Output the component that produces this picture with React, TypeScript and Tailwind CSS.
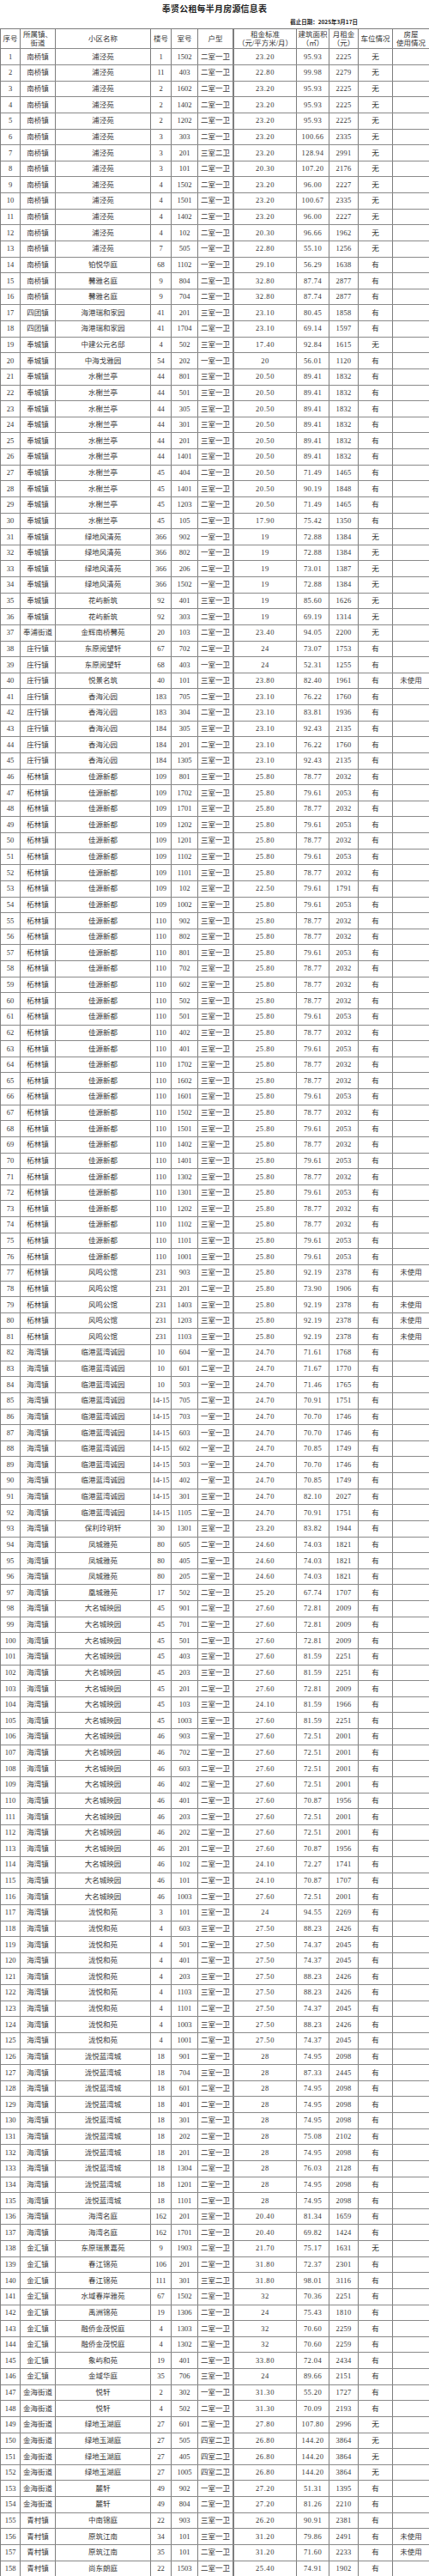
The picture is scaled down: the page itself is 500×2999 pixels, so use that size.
import React from "react";

const RAW = `南桥镇|浦泾苑|1|1502|二室一卫|23.20|95.93|2225|无
南桥镇|浦泾苑|11|403|二室一卫|22.80|99.98|2279|无
南桥镇|浦泾苑|2|1602|二室一卫|23.20|95.93|2225|无
南桥镇|浦泾苑|2|1402|二室一卫|23.20|95.93|2225|无
南桥镇|浦泾苑|2|1202|二室一卫|23.20|95.93|2225|无
南桥镇|浦泾苑|3|303|二室一卫|23.20|100.66|2335|无
南桥镇|浦泾苑|3|201|三室二卫|23.20|128.94|2991|无
南桥镇|浦泾苑|3|101|二室一卫|20.30|107.20|2176|无
南桥镇|浦泾苑|4|1502|二室一卫|23.20|96.00|2227|无
南桥镇|浦泾苑|4|1501|二室一卫|23.20|100.67|2335|无
南桥镇|浦泾苑|4|1402|二室一卫|23.20|96.00|2227|无
南桥镇|浦泾苑|4|102|二室一卫|20.30|96.66|1962|无
南桥镇|浦泾苑|7|505|一室一卫|22.80|55.10|1256|无
南桥镇|铂悦华庭|68|1102|一室一卫|29.10|56.29|1638|有
南桥镇|馨雅名庭|9|804|二室一卫|32.80|87.74|2877|有
南桥镇|馨雅名庭|9|704|二室一卫|32.80|87.74|2877|有
四团镇|海港瑞和家园|41|201|三室一卫|23.10|80.45|1858|有
四团镇|海港瑞和家园|41|1704|二室一卫|23.10|69.14|1597|有
奉城镇|中建公元名邸|4|502|三室一卫|17.40|92.84|1615|无
奉城镇|中海戈雅园|54|202|一室一卫|20|56.01|1120|有
奉城镇|水榭兰亭|44|801|三室一卫|20.50|89.41|1832|有
奉城镇|水榭兰亭|44|501|三室一卫|20.50|89.41|1832|有
奉城镇|水榭兰亭|44|305|三室一卫|20.50|89.41|1832|有
奉城镇|水榭兰亭|44|301|三室一卫|20.50|89.41|1832|有
奉城镇|水榭兰亭|44|201|三室一卫|20.50|89.41|1832|有
奉城镇|水榭兰亭|44|1401|三室一卫|20.50|89.41|1832|有
奉城镇|水榭兰亭|45|404|二室一卫|20.50|71.49|1465|有
奉城镇|水榭兰亭|45|1401|三室一卫|20.50|90.19|1848|有
奉城镇|水榭兰亭|45|1203|二室一卫|20.50|71.49|1465|有
奉城镇|水榭兰亭|45|105|二室一卫|17.90|75.42|1350|有
奉城镇|绿地风清苑|366|902|一室一卫|19|72.88|1384|无
奉城镇|绿地风清苑|366|802|一室一卫|19|72.88|1384|无
奉城镇|绿地风清苑|366|206|二室一卫|19|73.01|1387|无
奉城镇|绿地风清苑|366|1502|一室一卫|19|72.88|1384|无
奉城镇|花屿新筑|92|401|三室一卫|19|85.60|1626|无
奉城镇|花屿新筑|92|303|二室一卫|19|69.19|1314|无
奉浦街道|金辉南桥馨苑|20|103|二室一卫|23.40|94.05|2200|无
庄行镇|东原阅望轩|67|702|二室一卫|24|73.07|1753|有
庄行镇|东原阅望轩|68|403|一室一卫|24|52.31|1255|有
庄行镇|悦景名筑|40|101|三室一卫|23.80|82.40|1961|有|未使用
庄行镇|香海沁园|183|705|二室一卫|23.10|76.22|1760|有
庄行镇|香海沁园|183|304|二室一卫|23.10|83.81|1936|有
庄行镇|香海沁园|184|305|三室一卫|23.10|92.43|2135|有
庄行镇|香海沁园|184|201|二室一卫|23.10|76.22|1760|有
庄行镇|香海沁园|184|1305|三室一卫|23.10|92.43|2135|有
柘林镇|佳源新都|109|801|三室一卫|25.80|78.77|2032|有
柘林镇|佳源新都|109|1702|三室一卫|25.80|79.61|2053|有
柘林镇|佳源新都|109|1701|三室一卫|25.80|78.77|2032|有
柘林镇|佳源新都|109|1202|三室一卫|25.80|79.61|2053|有
柘林镇|佳源新都|109|1201|三室一卫|25.80|78.77|2032|有
柘林镇|佳源新都|109|1102|三室一卫|25.80|79.61|2053|有
柘林镇|佳源新都|109|1101|三室一卫|25.80|78.77|2032|有
柘林镇|佳源新都|109|102|三室一卫|22.50|79.61|1791|有
柘林镇|佳源新都|109|1002|三室一卫|25.80|79.61|2053|有
柘林镇|佳源新都|110|902|三室一卫|25.80|78.77|2032|有
柘林镇|佳源新都|110|802|三室一卫|25.80|78.77|2032|有
柘林镇|佳源新都|110|801|三室一卫|25.80|79.61|2053|有
柘林镇|佳源新都|110|702|三室一卫|25.80|78.77|2032|有
柘林镇|佳源新都|110|602|三室一卫|25.80|78.77|2032|有
柘林镇|佳源新都|110|502|三室一卫|25.80|78.77|2032|有
柘林镇|佳源新都|110|501|三室一卫|25.80|79.61|2053|有
柘林镇|佳源新都|110|402|三室一卫|25.80|78.77|2032|有
柘林镇|佳源新都|110|401|三室一卫|25.80|79.61|2053|有
柘林镇|佳源新都|110|1702|三室一卫|25.80|78.77|2032|有
柘林镇|佳源新都|110|1602|三室一卫|25.80|78.77|2032|有
柘林镇|佳源新都|110|1601|三室一卫|25.80|79.61|2053|有
柘林镇|佳源新都|110|1502|三室一卫|25.80|78.77|2032|有
柘林镇|佳源新都|110|1501|三室一卫|25.80|79.61|2053|有
柘林镇|佳源新都|110|1402|三室一卫|25.80|78.77|2032|有
柘林镇|佳源新都|110|1401|三室一卫|25.80|79.61|2053|有
柘林镇|佳源新都|110|1302|三室一卫|25.80|78.77|2032|有
柘林镇|佳源新都|110|1301|三室一卫|25.80|79.61|2053|有
柘林镇|佳源新都|110|1202|三室一卫|25.80|78.77|2032|有
柘林镇|佳源新都|110|1102|三室一卫|25.80|78.77|2032|有
柘林镇|佳源新都|110|1101|三室一卫|25.80|79.61|2053|有
柘林镇|佳源新都|110|1001|三室一卫|25.80|79.61|2053|有
柘林镇|风鸣公馆|231|903|三室一卫|25.80|92.19|2378|有|未使用
柘林镇|风鸣公馆|231|201|二室一卫|25.80|73.90|1906|有
柘林镇|风鸣公馆|231|1403|三室一卫|25.80|92.19|2378|有|未使用
柘林镇|风鸣公馆|231|1203|三室一卫|25.80|92.19|2378|有|未使用
柘林镇|风鸣公馆|231|1103|三室一卫|25.80|92.19|2378|有|未使用
海湾镇|临港蓝湾诚园|10|604|一室一卫|24.70|71.61|1768|有
海湾镇|临港蓝湾诚园|10|601|二室一卫|24.70|71.67|1770|有
海湾镇|临港蓝湾诚园|10|503|一室一卫|24.70|71.46|1765|有
海湾镇|临港蓝湾诚园|14-15|705|二室一卫|24.70|70.91|1751|有
海湾镇|临港蓝湾诚园|14-15|703|一室一卫|24.70|70.70|1746|有
海湾镇|临港蓝湾诚园|14-15|603|一室一卫|24.70|70.70|1746|有
海湾镇|临港蓝湾诚园|14-15|602|一室一卫|24.70|70.85|1749|有
海湾镇|临港蓝湾诚园|14-15|503|一室一卫|24.70|70.70|1746|有
海湾镇|临港蓝湾诚园|14-15|402|一室一卫|24.70|70.85|1749|有
海湾镇|临港蓝湾诚园|14-15|301|三室一卫|24.70|82.10|2027|有
海湾镇|临港蓝湾诚园|14-15|1105|二室一卫|24.70|70.91|1751|有
海湾镇|保利玲玥轩|30|1301|三室一卫|23.20|83.82|1944|有
海湾镇|凤城雅苑|80|605|二室一卫|24.60|74.03|1821|有
海湾镇|凤城雅苑|80|405|二室一卫|24.60|74.03|1821|有
海湾镇|凤城雅苑|80|205|二室一卫|24.60|74.03|1821|有
海湾镇|凰城雅苑|17|502|二室一卫|25.20|67.74|1707|有
海湾镇|大名城映园|45|901|二室一卫|27.60|72.81|2009|有
海湾镇|大名城映园|45|701|二室一卫|27.60|72.81|2009|有
海湾镇|大名城映园|45|501|二室一卫|27.60|72.81|2009|有
海湾镇|大名城映园|45|403|三室一卫|27.60|81.59|2251|有
海湾镇|大名城映园|45|203|三室一卫|27.60|81.59|2251|有
海湾镇|大名城映园|45|201|二室一卫|27.60|72.81|2009|有
海湾镇|大名城映园|45|103|三室一卫|24.10|81.59|1966|有
海湾镇|大名城映园|45|1003|三室一卫|27.60|81.59|2251|有
海湾镇|大名城映园|46|903|二室一卫|27.60|72.51|2001|有
海湾镇|大名城映园|46|702|二室一卫|27.60|72.51|2001|有
海湾镇|大名城映园|46|603|二室一卫|27.60|72.51|2001|有
海湾镇|大名城映园|46|402|二室一卫|27.60|72.51|2001|有
海湾镇|大名城映园|46|401|二室一卫|27.60|70.87|1956|有
海湾镇|大名城映园|46|203|二室一卫|27.60|72.51|2001|有
海湾镇|大名城映园|46|202|二室一卫|27.60|72.51|2001|有
海湾镇|大名城映园|46|201|二室一卫|27.60|70.87|1956|有
海湾镇|大名城映园|46|102|二室一卫|24.10|72.27|1741|有
海湾镇|大名城映园|46|101|二室一卫|24.10|70.87|1707|有
海湾镇|大名城映园|46|1003|二室一卫|27.60|72.51|2001|有
海湾镇|泷悦和苑|3|101|三室一卫|24|94.55|2269|有
海湾镇|泷悦和苑|4|603|三室一卫|27.50|88.23|2426|有
海湾镇|泷悦和苑|4|501|二室一卫|27.50|74.37|2045|有
海湾镇|泷悦和苑|4|401|二室一卫|27.50|74.37|2045|有
海湾镇|泷悦和苑|4|203|三室一卫|27.50|88.23|2426|有
海湾镇|泷悦和苑|4|1103|三室一卫|27.50|88.23|2426|有
海湾镇|泷悦和苑|4|1101|二室一卫|27.50|74.37|2045|有
海湾镇|泷悦和苑|4|1003|三室一卫|27.50|88.23|2426|有
海湾镇|泷悦和苑|4|1001|二室一卫|27.50|74.37|2045|有
海湾镇|泷悦蓝湾城|18|901|二室一卫|28|74.95|2098|有
海湾镇|泷悦蓝湾城|18|704|三室一卫|28|87.33|2445|有
海湾镇|泷悦蓝湾城|18|601|二室一卫|28|74.95|2098|有
海湾镇|泷悦蓝湾城|18|401|二室一卫|28|74.95|2098|有
海湾镇|泷悦蓝湾城|18|301|二室一卫|28|74.95|2098|有
海湾镇|泷悦蓝湾城|18|202|二室一卫|28|75.08|2102|有
海湾镇|泷悦蓝湾城|18|201|二室一卫|28|74.95|2098|有
海湾镇|泷悦蓝湾城|18|1304|二室一卫|28|76.03|2128|有
海湾镇|泷悦蓝湾城|18|1201|二室一卫|28|74.95|2098|有
海湾镇|泷悦蓝湾城|18|1101|二室一卫|28|74.95|2098|有
海湾镇|海湾名庭|162|201|三室一卫|20.40|81.34|1659|有
海湾镇|海湾名庭|162|1701|二室一卫|20.40|69.82|1424|有
金汇镇|东原瑞景嘉苑|9|1903|二室一卫|21.70|75.17|1631|无
金汇镇|春江锦苑|106|201|二室一卫|31.80|72.37|2301|有
金汇镇|春江锦苑|111|301|三室二卫|31.80|98.01|3116|有
金汇镇|水域春岸雅苑|67|1502|二室一卫|32|70.36|2251|有
金汇镇|禹洲锦苑|19|1306|二室一卫|24|75.43|1810|有
金汇镇|融侨金茂悦庭|4|1303|二室一卫|32|70.60|2259|有
金汇镇|融侨金茂悦庭|4|1302|二室一卫|32|70.60|2259|有
金汇镇|象屿和苑|19|401|二室一卫|33.80|72.04|2434|有
金汇镇|金域华庭|35|706|三室一卫|24|89.66|2151|有
金海街道|悦轩|2|302|一室一卫|31.30|55.20|1727|有
金海街道|悦轩|4|502|二室一卫|31.30|70.09|2193|有
金海街道|绿地玉湖庭|27|601|二室一卫|27.80|107.80|2996|无
金海街道|绿地玉湖庭|27|505|四室二卫|26.80|144.20|3864|无
金海街道|绿地玉湖庭|27|405|四室二卫|26.80|144.20|3864|无
金海街道|绿地玉湖庭|27|1005|四室二卫|26.80|144.20|3864|无
金海街道|麓轩|49|902|一室一卫|27.20|51.31|1395|有
金海街道|麓轩|49|804|二室一卫|27.20|81.26|2210|有
青村镇|中南锦庭|22|903|三室一卫|26.20|90.91|2381|有
青村镇|原筑江南|34|101|三室一卫|31.20|79.86|2491|有|未使用
青村镇|原筑江南|35|101|二室一卫|31.20|71.60|2233|有|未使用
青村镇|尚东朗庭|22|1503|二室一卫|25.40|74.91|1902|有`;

const rows = RAW.split("\n").map((l) => l.split("|"));

const GRID =
  "grid grid-cols-[23px_41px_111px_24px_31px_42px_73px_38px_34px_40px_43px]";

const cell =
  "flex items-center justify-center border-r border-[#7d7d7d] text-center whitespace-nowrap overflow-hidden";

export default function App() {
  return (
    <div
      className="w-[500px] bg-white text-[#363636]"
      style={{ fontFamily: '"Liberation Serif", "Noto Sans CJK SC", serif' }}
    >
      <div className="h-[18px] flex items-center justify-center">
        <span
          className="text-[10px] font-bold text-[#222] tracking-[0.2px]"
          style={{ fontFamily: '"Noto Sans CJK SC", sans-serif' }}
        >
          奉贤公租每半月房源信息表
        </span>
      </div>
      <div className="h-[15px] flex items-center justify-end pr-[83px]">
        <span
          className="text-[6.5px] font-bold text-[#222]"
          style={{ fontFamily: '"Noto Sans CJK SC", sans-serif' }}
        >
          截止日期：2025年3月17日
        </span>
      </div>
      <div className="border-t border-l border-[#7d7d7d] text-[8.5px]">
        <div className={`${GRID} h-[23.4px] border-b border-[#8a8a8a] leading-[10px]`}>
          <div className={cell}>序号</div>
          <div className={`${cell} flex-col`}>
            <span>所属镇、</span>
            <span>街道</span>
          </div>
          <div className={cell}>小区名称</div>
          <div className={cell}>楼号</div>
          <div className={cell}>室号</div>
          <div className={`${cell} border-r-2`}>户型</div>
          <div className={`${cell} flex-col`}>
            <span>租金标准</span>
            <span>（元/平方米/月）</span>
          </div>
          <div className={`${cell} flex-col`}>
            <span>建筑面积</span>
            <span>（㎡）</span>
          </div>
          <div className={`${cell} flex-col`}>
            <span>月租金</span>
            <span>（元）</span>
          </div>
          <div className={cell}>车位情况</div>
          <div className={`${cell} flex-col`}>
            <span>房屋</span>
            <span>使用情况</span>
          </div>
        </div>
        {rows.map((r, i) => (
          <div key={i} className={`${GRID} h-[18.63px] border-b border-[#8a8a8a]`}>
            <div className={cell}>{i + 1}</div>
            <div className={cell}>{r[0]}</div>
            <div className={cell}>{r[1]}</div>
            <div className={cell}>{r[2]}</div>
            <div className={cell}>{r[3]}</div>
            <div className={`${cell} border-r-2`}>{r[4]}</div>
            <div className={`${cell} tracking-[0.6px]`}>{r[5]}</div>
            <div className={`${cell} tracking-[0.4px]`}>{r[6]}</div>
            <div className={`${cell} tracking-[0.2px]`}>{r[7]}</div>
            <div className={cell}>{r[8]}</div>
            <div className={cell}>{r[9] || ""}</div>
          </div>
        ))}
      </div>
    </div>
  );
}
